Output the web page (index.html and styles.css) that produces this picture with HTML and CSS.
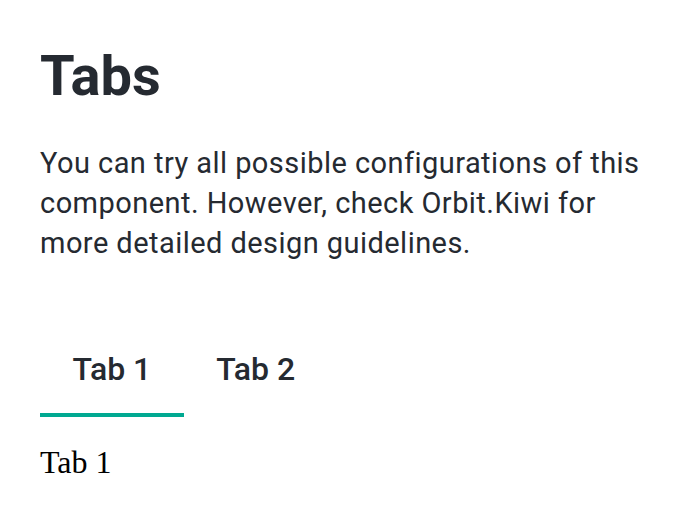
FILE: index.html
```html
<!DOCTYPE html>
<html>
<head>
<meta charset="utf-8">
<link rel="stylesheet" href="styles.css">
</head>
<body>
<main class="page">
  <h1 class="title">Tabs</h1>
  <p class="lead">You can try all possible configurations of this component. However, check Orbit.Kiwi for more detailed design guidelines.</p>
  <div class="tabs">
    <div class="tablist">
      <button class="tab tab-active">Tab 1</button>
      <button class="tab">Tab 2</button>
    </div>
    <div class="panel">Tab 1</div>
  </div>
</main>
</body>
</html>
```
FILE: styles.css
```css
html, body {
  margin: 0;
  padding: 0;
  background: #ffffff;
}
.page {
  padding: 40px 40px;
  color: #252a31;
  font-family: Roboto, "Liberation Sans", sans-serif;
}
.title {
  margin: 0;
  font-size: 56px;
  line-height: 72px;
  font-weight: 700;
}
.lead {
  margin: 31px 0 0;
  font-size: 29px;
  letter-spacing: 0.45px;
  line-height: 40px;
  font-weight: 400;
}
.tabs {
  margin-top: 62px;
}
.tablist {
  display: flex;
}
.tab {
  background: none;
  border: 0;
  border-bottom: 4px solid transparent;
  padding: 0 32.5px;
  height: 92px;
  font-family: Roboto, "Liberation Sans", sans-serif;
  font-size: 32px;
  font-weight: 500;
  color: #252a31;
  cursor: pointer;
}
.tab-active {
  border-bottom-color: #00a991;
}
.panel {
  margin-top: 27px;
  font-family: "Liberation Serif", serif;
  font-size: 32px;
  color: #000;
}
```
